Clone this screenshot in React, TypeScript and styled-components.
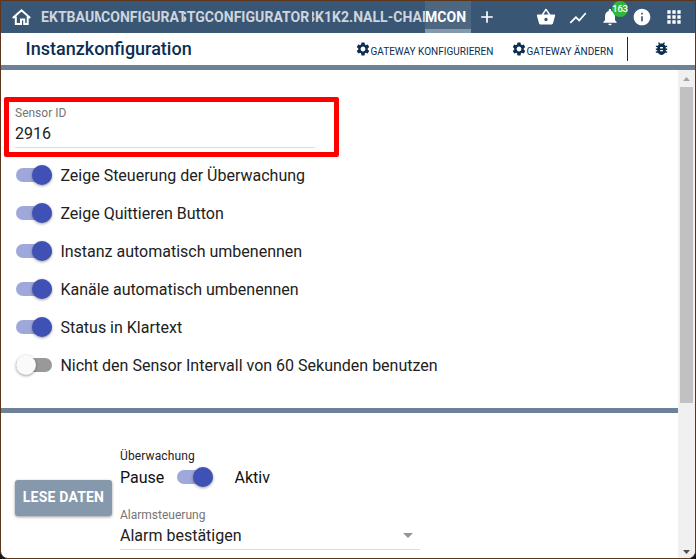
import React from 'react';
import styled, { createGlobalStyle, css } from 'styled-components';
import {
  MdAdd,
  MdApps,
  MdBugReport,
  MdInfo,
  MdNotifications,
  MdSettings,
  MdShoppingBasket,
  MdShowChart,
} from 'react-icons/md';

const GlobalStyle = createGlobalStyle`
  * { box-sizing: border-box; }
  body {
    margin: 0;
    overflow: hidden;
    background: #15161c;
    font-family: Roboto, "Liberation Sans", sans-serif;
    color: #212121;
  }
`;

const Window = styled.div`
  width: 696px;
  height: 559px;
  border: 1px solid #5b351c;
  border-radius: 0 0 8px 8px;
  background: #fff;
  overflow: hidden;
  display: flex;
  flex-direction: column;
`;

const TopBar = styled.header`
  height: 32px;
  flex: none;
  display: flex;
  align-items: center;
  background: #395674;
  color: #fff;
`;

const HomeButton = styled.div`
  width: 40px;
  height: 32px;
  padding: 8px 0 0 11px;
`;

const Tab = styled.div<{ $width: number; $shift?: number; $active?: boolean }>`
  width: ${(p) => p.$width}px;
  height: 32px;
  text-indent: ${(p) => p.$shift ?? 0}px;
  overflow: hidden;
  white-space: pre;
  font-size: 14px;
  font-weight: 700;
  line-height: 32px;
  letter-spacing: 0.05px;
  color: #ced5dc;
  ${(p) =>
    p.$active &&
    css`
      color: #fff;
      background: #4d6781;
      border-bottom: 4px solid #8598ac;
    `}
`;

const BarIcon = styled.div<{ $gap: number; $drop?: number }>`
  position: relative;
  height: 20px;
  margin-left: ${(p) => p.$gap}px;
  margin-top: ${(p) => p.$drop ?? 0}px;
  svg { display: block; }
`;

const Badge = styled.span`
  position: absolute;
  left: 12px;
  top: -6px;
  width: 16px;
  height: 16px;
  border-radius: 50%;
  background: #2fb73b;
  font-size: 9.5px;
  font-weight: 500;
  line-height: 16px;
  letter-spacing: -0.2px;
  display: flex;
  justify-content: center;
`;

const TitleBar = styled.div`
  height: 37px;
  flex: none;
  display: flex;
  border-bottom: 5px solid #6b8299;
  color: #0b2e52;
`;

const Title = styled.h1`
  margin: 0;
  padding-left: 24.6px;
  width: 354px;
  font-size: 18px;
  font-weight: 500;
  line-height: 31px;
`;

const Action = styled.div<{ $width: number }>`
  width: ${(p) => p.$width}px;
  height: 32px;
  display: flex;
  white-space: nowrap;
  svg { flex: none; margin-top: 8px; }
`;

const ActionText = styled.span`
  font-size: 10px;
  line-height: 37px;
  margin-left: -0.5px;
`;

const Divider = styled.div`
  width: 1px;
  height: 24px;
  margin: 4px 25px 0 0;
  background: #0b2e52;
`;

const Debug = styled.div`
  padding-top: 7px;
`;

const Body = styled.div`
  flex: 1;
  min-height: 0;
  display: flex;
`;

const Content = styled.main`
  width: 677px;
  overflow: hidden;
`;

const General = styled.section`
  height: 343px;
  padding: 27px 0 0 3px;
  border-bottom: 5px solid #6b8299;
`;

const Highlight = styled.div`
  width: 335px;
  height: 60px;
  border: 5px solid #f00;
  border-radius: 2px;
  padding: 3px 0 0 6px;
  margin-bottom: -1px;
`;

const Field = styled.div<{ $top?: number }>`
  width: 300px;
  margin-top: ${(p) => p.$top ?? 0}px;
  border-bottom: 1px solid #dcdcdc;
`;

const FieldLabel = styled.div`
  font-size: 12px;
  line-height: 16px;
  color: #757575;
`;

const FieldValue = styled.div`
  height: 26px;
  display: flex;
  justify-content: space-between;
  font-size: 16px;
  line-height: 25px;
`;

const Option = styled.div`
  height: 38px;
  padding-left: 12px;
  display: flex;
  align-items: center;
  font-size: 16px;
`;

const OptionText = styled.span`
  margin-left: 8.4px;
  padding-top: 1px;
`;

const Track = styled.div<{ $on: boolean }>`
  width: 36px;
  height: 14px;
  border-radius: 7px;
  display: flex;
  align-items: center;
  justify-content: ${(p) => (p.$on ? 'flex-end' : 'flex-start')};
  background: ${(p) => (p.$on ? '#9fa8da' : '#999')};
`;

const Thumb = styled.div<{ $on: boolean }>`
  width: 20px;
  height: 20px;
  flex: none;
  border-radius: 50%;
  background: ${(p) => (p.$on ? '#3f51b5' : '#fafafa')};
  box-shadow: 0 1px 3px rgba(0, 0, 0, 0.4);
`;

const Monitoring = styled.section`
  display: flex;
  padding: 35px 0 0 14px;
`;

const ReadButton = styled.button`
  width: 97px;
  height: 36px;
  margin: 32px 8px 0 0;
  padding: 0 0 2px;
  border: 0;
  border-radius: 3px;
  background: #8598ac;
  color: #fff;
  font: 700 14px/34px Roboto, sans-serif;
  letter-spacing: 0.2px;
  box-shadow: 0 1px 3px rgba(0, 0, 0, 0.4);
`;

const Controls = styled.div``;

const SmallLabel = styled.div`
  font-size: 12px;
  line-height: 16px;
  letter-spacing: 0.12px;
`;

const StateRow = styled.div`
  height: 26px;
  display: flex;
  align-items: center;
  font-size: 16px;
  color: #111;
`;

const StateText = styled.span<{ $width?: number; $gap?: number }>`
  width: ${(p) => (p.$width ? `${p.$width}px` : 'auto')};
  margin-left: ${(p) => p.$gap ?? 0}px;
  padding-top: 1px;
`;

const SelectArrow = styled.span`
  width: 0;
  height: 0;
  margin: 10px 7px 0 0;
  border: 5px solid transparent;
  border-top-color: #959595;
  border-bottom: 0;
`;

const Scrollbar = styled.div`
  width: 17px;
  background: #f0f0f0;
  display: flex;
  flex-direction: column;
  align-items: center;
  justify-content: space-between;
  padding: 7px 0 4px;
`;

const ScrollArrow = styled.span<{ $down?: boolean }>`
  width: 7px;
  height: 4px;
  background: ${(p) => (p.$down ? '#505050' : '#a3a3a3')};
  clip-path: ${(p) => (p.$down ? 'polygon(0 0, 100% 0, 50% 100%)' : 'polygon(50% 0, 100% 100%, 0 100%)')};
`;

const ScrollThumb = styled.div`
  width: 13px;
  height: 316px;
  margin: 6px 0 auto;
  background: #c1c1c1;
`;

function Switch({ on }: { on: boolean }) {
  return (
    <Track $on={on}>
      <Thumb $on={on} />
    </Track>
  );
}

const options = [
  { text: 'Zeige Steuerung der Überwachung', on: true },
  { text: 'Zeige Quittieren Button', on: true },
  { text: 'Instanz automatisch umbenennen', on: true },
  { text: 'Kanäle automatisch umbenennen', on: true },
  { text: 'Status in Klartext', on: true },
  { text: 'Nicht den Sensor Intervall von 60 Sekunden benutzen', on: false },
];

export default function App() {
  return (
    <>
      <GlobalStyle />
      <Window>
        <TopBar>
          <HomeButton>
            <svg width="19" height="17" viewBox="0 0 19 17" fill="none" stroke="#fff" strokeWidth="2">
              <path d="M.8 9 9.5 1.3 18.2 9M3.8 7.5V15H9v-4.5h3.2V15h3.5V7.5" />
            </svg>
          </HomeButton>
          <Tab $width={60}>EKTBAUM</Tab>
          <Tab $width={83}>CONFIGURAT</Tab>
          <Tab $width={128} $shift={-6}>STGCONFIGURATOR #</Tab>
          <Tab $width={51} $shift={-6}>BK1K2.N</Tab>
          <Tab $width={62}>ALL-CHAM</Tab>
          <Tab $width={46} $active>MCON</Tab>
          <BarIcon $gap={6}><MdAdd size={20} /></BarIcon>
          <BarIcon $gap={39}><MdShoppingBasket size={20} /></BarIcon>
          <BarIcon $gap={12} $drop={2}><MdShowChart size={20} /></BarIcon>
          <BarIcon $gap={12}>
            <MdNotifications size={20} />
            <Badge>163</Badge>
          </BarIcon>
          <BarIcon $gap={12}><MdInfo size={20} /></BarIcon>
          <BarIcon $gap={12}><MdApps size={20} /></BarIcon>
        </TopBar>
        <TitleBar>
          <Title>Instanzkonfiguration</Title>
          <Action $width={156}>
            <MdSettings size={16} />
            <ActionText>GATEWAY KONFIGURIEREN</ActionText>
          </Action>
          <Action $width={116}>
            <MdSettings size={16} />
            <ActionText>GATEWAY ÄNDERN</ActionText>
          </Action>
          <Divider />
          <Debug><MdBugReport size={17} /></Debug>
        </TitleBar>
        <Body>
          <Content>
            <General>
              <Highlight>
                <Field>
                  <FieldLabel>Sensor ID</FieldLabel>
                  <FieldValue>2916</FieldValue>
                </Field>
              </Highlight>
              {options.map((o) => (
                <Option key={o.text}>
                  <Switch on={o.on} />
                  <OptionText>{o.text}</OptionText>
                </Option>
              ))}
            </General>
            <Monitoring>
              <ReadButton>LESE DATEN</ReadButton>
              <Controls>
                <SmallLabel>Überwachung</SmallLabel>
                <StateRow>
                  <StateText $width={57}>Pause</StateText>
                  <Switch on />
                  <StateText $gap={21.5}>Aktiv</StateText>
                </StateRow>
                <Field $top={17}>
                  <FieldLabel>Alarmsteuerung</FieldLabel>
                  <FieldValue>
                    Alarm bestätigen
                    <SelectArrow />
                  </FieldValue>
                </Field>
              </Controls>
            </Monitoring>
          </Content>
          <Scrollbar>
            <ScrollArrow />
            <ScrollThumb />
            <ScrollArrow $down />
          </Scrollbar>
        </Body>
      </Window>
    </>
  );
}
